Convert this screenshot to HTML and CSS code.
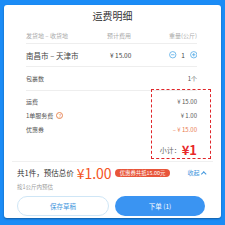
FILE: index.html
```html
<!DOCTYPE html>
<html lang="zh">
<head>
<meta charset="utf-8">
<link rel="stylesheet" href="styles.css">
</head>
<body>
<div class="card">
  <div class="title">运费明细</div>
  <div class="content">
    <div class="grid head">
      <span>发货地 – 收货地</span>
      <span>预计费用</span>
      <span class="r">重量(公斤)</span>
    </div>
    <div class="grid row1">
      <span class="route">南昌市 – 天津市</span>
      <span class="price">¥ 15.00</span>
      <span class="stepper">
        <svg class="circ" viewBox="0 0 8 8"><circle cx="4" cy="4" r="3.4"/><path d="M2.2 4h3.6"/></svg>
        <span class="qty">1</span>
        <svg class="circ" viewBox="0 0 8 8"><circle cx="4" cy="4" r="3.4"/><path d="M2.2 4h3.6M4 2.2v3.6"/></svg>
      </span>
    </div>
    <div class="line pkg">
      <span>包裹数</span>
      <span>1个</span>
    </div>
    <div class="fees">
      <div class="line fee"><span>运费</span><span>¥ 15.00</span></div>
      <div class="line fee"><span class="lab">1单服务费 <span class="q">?</span></span><span>¥ 1.00</span></div>
      <div class="line fee"><span>优惠券</span><span class="minus">– ¥ 15.00</span></div>
      <div class="subtotal"><span class="sublab">小计：</span><span class="subval">¥1</span></div>
    </div>
  </div>
  <div class="mark"></div>
  <div class="footer">
    <div class="sum">
      <span class="sumlab">共1件，预估总价</span>
      <span class="total">¥1.00</span>
      <span class="badge">优惠券共抵15.00元</span>
      <span class="fold">收起 <span class="caret"></span></span>
    </div>
    <div class="note">按1公斤内预估</div>
    <div class="btns">
      <button class="btn ghost">保存草稿</button>
      <button class="btn solid">下单 (1)</button>
    </div>
  </div>
</div>
</body>
</html>
```
FILE: styles.css
```css
* { box-sizing: border-box; }
html, body { margin: 0; padding: 0; }
body {
  width: 225px;
  height: 225px;
  background: #1b8cf6;
  padding: 5px 4px 0 4px;
  font-family: "Noto Sans CJK SC", "Noto Sans", sans-serif;
  color: #333;
  overflow: hidden;
}
.card {
  position: relative;
  background: #fff;
  border-radius: 3px;
  height: 213px;
  box-shadow: 0 1px 2px rgba(0, 0, 0, 0.35);
}
.title {
  height: 22px;
  line-height: 22px;
  text-align: center;
  font-size: 10px;
  color: #333;
}
.content {
  padding: 0 24px 0 22px;
}
.grid {
  display: grid;
  grid-template-columns: 81px 32px 1fr;
  align-items: center;
  border-bottom: 1px solid #eeeeee;
}
.r { text-align: right; }
.head {
  height: 17px;
  font-size: 6px;
  color: #aaa;
}
.row1 {
  height: 23px;
}
.route { font-size: 7.5px; color: #444; }
.price { font-size: 6.5px; color: #444; padding-left: 3px; }
.stepper {
  display: flex;
  justify-content: flex-end;
  align-items: center;
  gap: 4px;
}
.circ {
  width: 7.5px;
  height: 7.5px;
  fill: none;
  stroke: #4aa6e6;
  stroke-width: 0.8;
}
.qty { font-size: 6.5px; color: #444; width: 5px; text-align: center; }
.line {
  display: flex;
  justify-content: space-between;
  align-items: center;
}
.pkg {
  height: 24px;
  font-size: 6px;
  color: #555;
  border-bottom: 1px solid #eeeeee;
}
.fees { padding-top: 3px; }
.fee {
  height: 14.3px;
  font-size: 6px;
  color: #555;
}
.lab { display: flex; align-items: center; gap: 3px; }
.q {
  display: inline-flex;
  width: 7px;
  height: 7px;
  border: 0.8px solid #e88a55;
  border-radius: 50%;
  color: #e88a55;
  font-size: 5px;
  align-items: center;
  justify-content: center;
  line-height: 1;
}
.minus { color: #ea7a50; }
.subtotal {
  height: 22px;
  display: flex;
  justify-content: flex-end;
  align-items: center;
  padding-top: 4px;
}
.sublab { font-size: 7px; color: #666; }
.subval { font-size: 13px; font-weight: 700; color: #e8282a; margin-left: 1px; }
.mark {
  position: absolute;
  left: 147px;
  top: 84px;
  width: 60px;
  height: 70px;
  border: 1.6px dashed #e0262a;
}
.footer {
  margin: 2px 8px 0 8px;
  border-top: 1px solid #f0f0f0;
  padding: 3px 8px 0 5px;
}
.sum {
  display: flex;
  align-items: center;
  height: 16px;
}
.sumlab { font-size: 7.5px; color: #333; }
.total { font-size: 14px; color: #f4531e; margin-left: 3px; line-height: 1; }
.badge {
  margin-left: 3px;
  background: #e8553a;
  color: #fff;
  font-size: 5.4px;
  height: 8px;
  line-height: 8px;
  padding: 0 5px;
  border-radius: 4px;
  white-space: nowrap;
}
.fold {
  margin-left: auto;
  font-size: 6px;
  color: #3f96dd;
  display: flex;
  align-items: center;
  gap: 2px;
}
.caret {
  width: 3.5px;
  height: 3.5px;
  border-left: 0.8px solid #3f96dd;
  border-top: 0.8px solid #3f96dd;
  transform: rotate(45deg);
  margin-top: 2px;
}
.note {
  font-size: 5.5px;
  color: #999;
  height: 12px;
  line-height: 12px;
}
.btns {
  display: flex;
  gap: 6px;
  margin-top: 3px;
}
.btn {
  flex: 1;
  height: 20px;
  border-radius: 10px;
  font-family: inherit;
  font-size: 6.5px;
  padding: 0;
}
.ghost {
  background: #fff;
  border: 1px solid #cfe6f6;
  color: #3f96dd;
}
.solid {
  background: #3a94f2;
  border: none;
  color: #fff;
}
```
